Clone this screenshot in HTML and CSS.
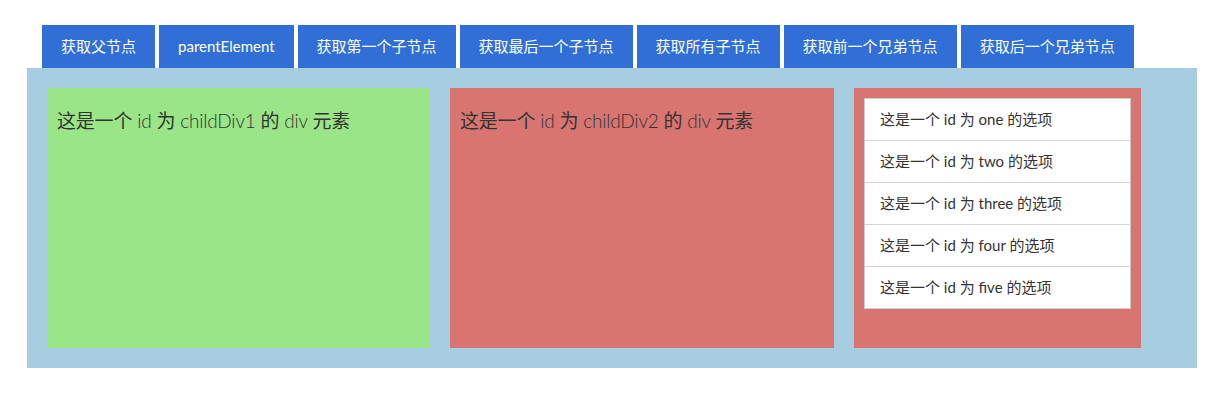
FILE: index.html
```html
<!DOCTYPE html>
<html lang="zh">
<head>
<meta charset="utf-8">
<title>DOM 节点</title>
<link rel="stylesheet" href="styles.css">
</head>
<body>
<div class="page">
  <div class="toolbar">
    <button class="btn">获取父节点</button>
    <button class="btn">parentElement</button>
    <button class="btn">获取第一个子节点</button>
    <button class="btn">获取最后一个子节点</button>
    <button class="btn">获取所有子节点</button>
    <button class="btn">获取前一个兄弟节点</button>
    <button class="btn">获取后一个兄弟节点</button>
  </div>
  <div class="parent">
    <div class="child child-green">
      <h4 class="title">这是一个<span class="en"> id </span>为<span class="en"> childDiv1 </span>的<span class="en"> div </span>元素</h4>
    </div>
    <div class="child child-red">
      <h4 class="title">这是一个<span class="en"> id </span>为<span class="en"> childDiv2 </span>的<span class="en"> div </span>元素</h4>
    </div>
    <div class="child child-list">
      <ul class="list">
        <li class="item">这是一个 id 为 one 的选项</li>
        <li class="item">这是一个 id 为 two 的选项</li>
        <li class="item">这是一个 id 为 three 的选项</li>
        <li class="item">这是一个 id 为 four 的选项</li>
        <li class="item">这是一个 id 为 five 的选项</li>
      </ul>
    </div>
  </div>
</div>
</body>
</html>
```

FILE: styles.css
```css
* { box-sizing: border-box; }

body {
  margin: 0;
  background: #fff;
  font-family: Lato, "Noto Sans CJK SC", sans-serif;
  color: #333;
}

.page {
  padding: 25px 34px 0 27px;
}

.toolbar {
  display: flex;
  gap: 4px;
  padding-left: 15px;
}

.btn {
  height: 43px;
  padding: 0 18px;
  border: 1px solid #316fd6;
  background: #316fd6;
  color: #fff;
  font-family: Lato, "Noto Sans CJK SC", sans-serif;
  font-size: 15px;
  line-height: 1;
  cursor: pointer;
}

.parent {
  width: 1170px;
  height: 300px;
  background: #a7cde0;
  padding: 20px 20px 20px 21px;
  display: flex;
  gap: 20px;
  align-items: flex-start;
}

.child {
  height: 260px;
}

.child-green {
  width: 382px;
  background: #9ae587;
  padding: 10px 9px;
}

.child-red {
  width: 384px;
  background: #d87571;
  padding: 10px;
}

.child-list {
  width: 287px;
  background: #d87571;
  padding: 10px;
}

.title {
  margin: 10px 0 0;
  font-size: 19px;
  font-weight: normal;
  line-height: 26px;
  letter-spacing: -0.2px;
  color: #333;
}

.en {
  font-weight: 300;
}

.list {
  margin: 0;
  padding: 0;
  list-style: none;
  background: #fff;
  border: 1px solid #ccc;
}

.item {
  height: 42px;
  padding: 0 15px 2px;
  display: flex;
  align-items: center;
  font-size: 15px;
  color: #333;
  border-top: 1px solid #d4d4d4;
}

.item:first-child {
  border-top: none;
  height: 41px;
}
```
